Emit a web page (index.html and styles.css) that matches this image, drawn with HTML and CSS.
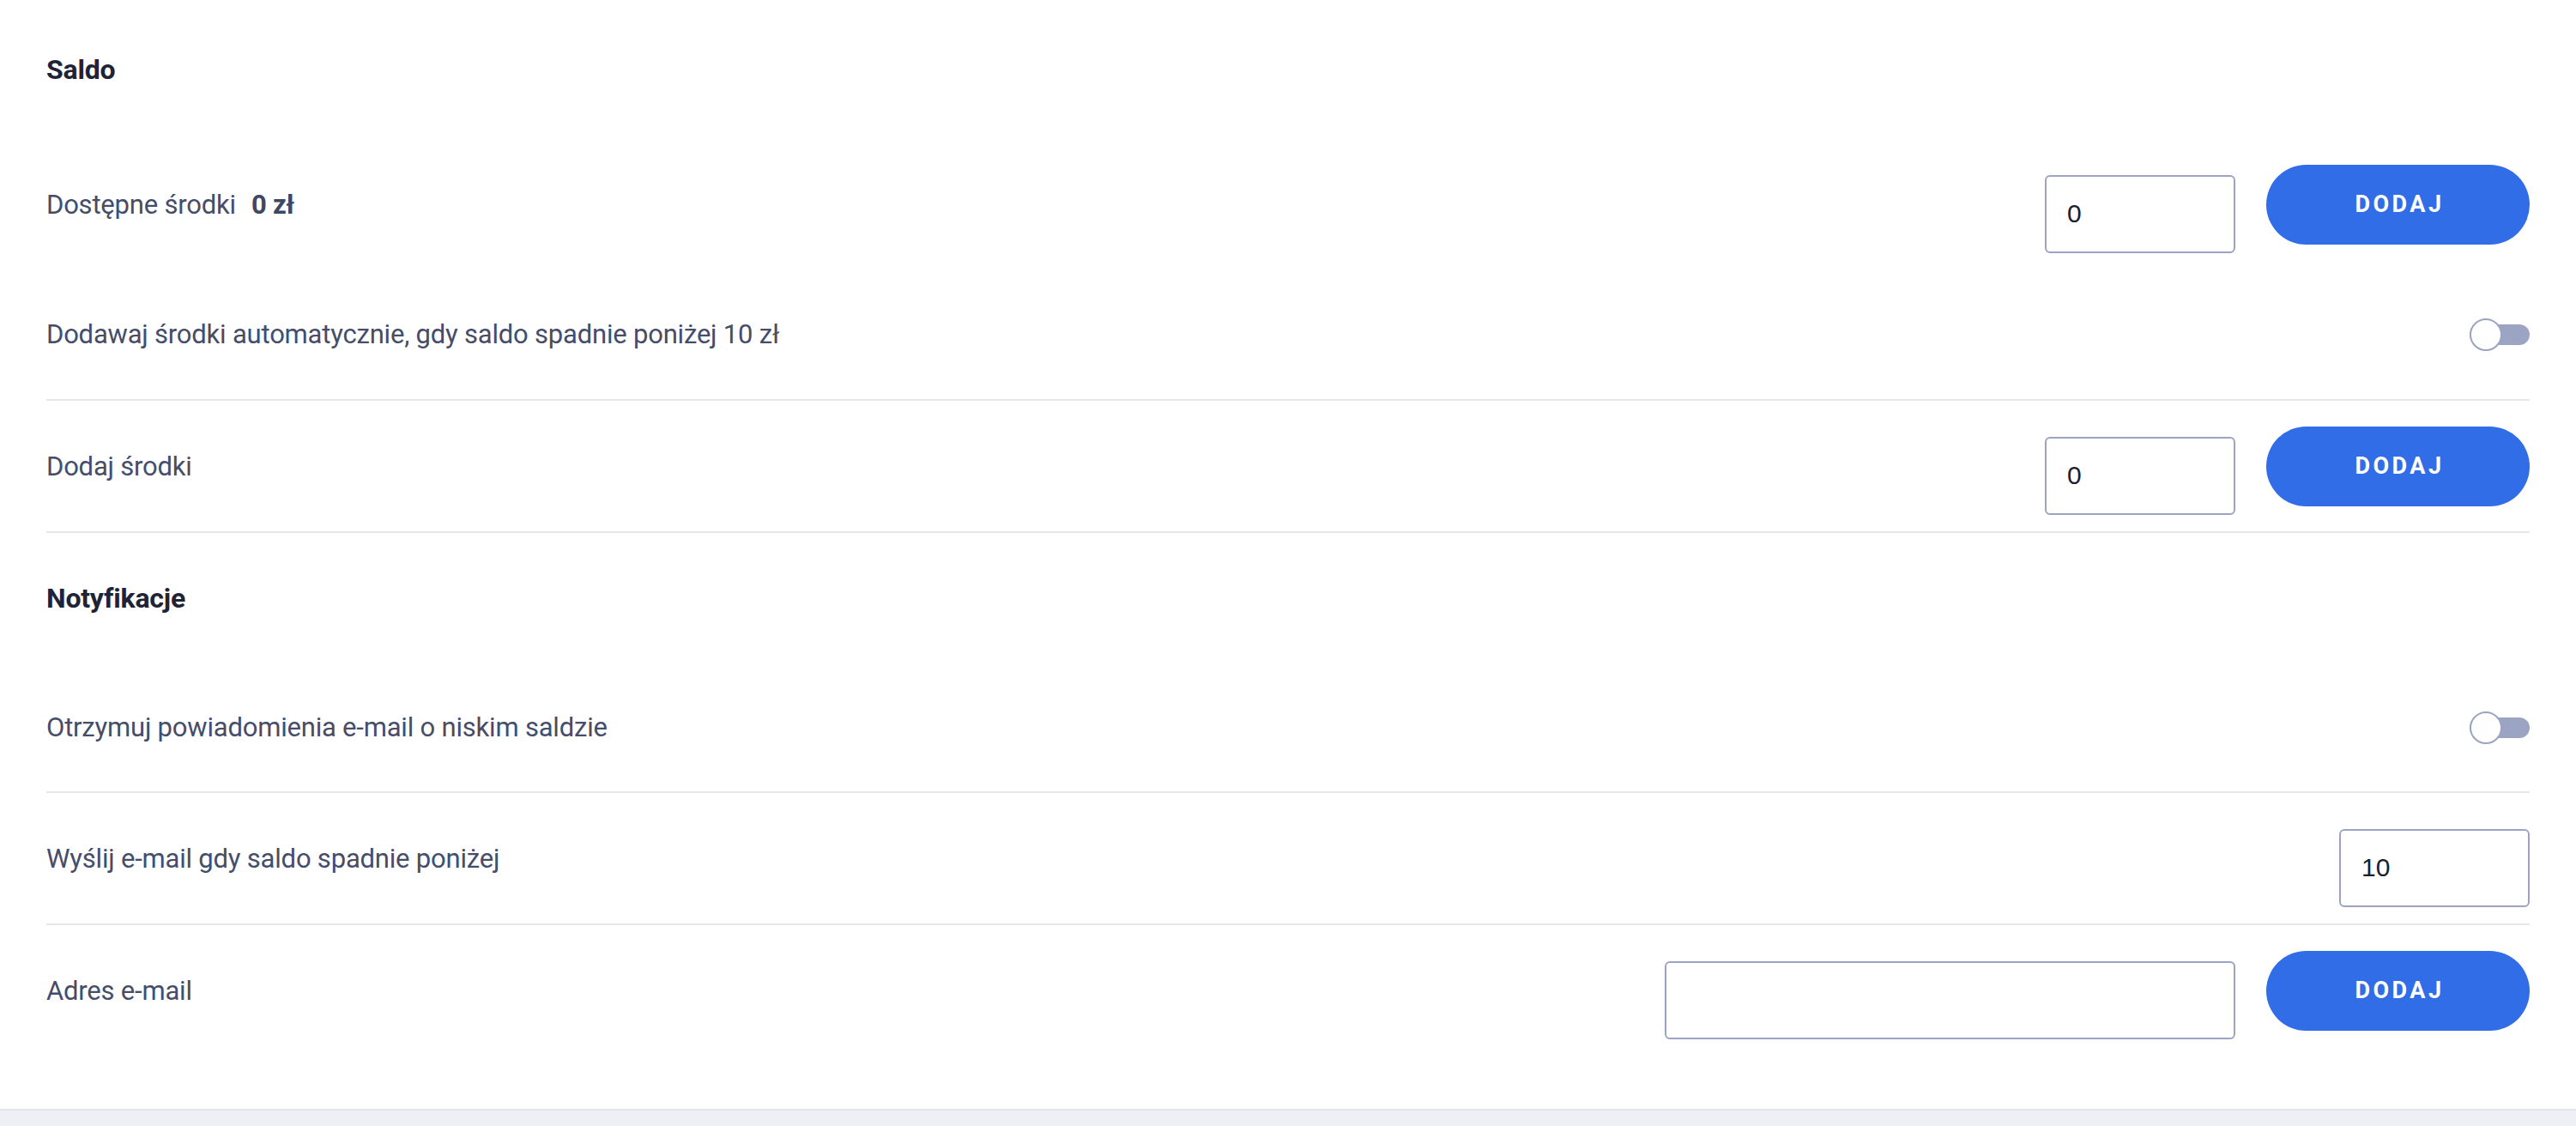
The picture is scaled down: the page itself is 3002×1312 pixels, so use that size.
FILE: index.html
```html
<!DOCTYPE html>
<html lang="pl">
<head>
<meta charset="utf-8">
<title>Saldo</title>
<link rel="stylesheet" href="styles.css">
</head>
<body>
<main class="panel">
  <section class="section">
    <div class="section-title section-title--first">Saldo</div>
    <div class="row row--plain">
      <div class="label">Dostępne środki<span class="amount">0 zł</span></div>
      <div class="controls">
        <input class="field field--num" type="text" value="0">
        <button class="btn" type="button">DODAJ</button>
      </div>
    </div>
    <div class="row row--short">
      <div class="label">Dodawaj środki automatycznie, gdy saldo spadnie poniżej 10 zł</div>
      <div class="toggle"><span class="toggle-knob"></span></div>
    </div>
    <div class="row">
      <div class="label">Dodaj środki</div>
      <div class="controls">
        <input class="field field--num" type="text" value="0">
        <button class="btn" type="button">DODAJ</button>
      </div>
    </div>
  </section>
  <section class="section">
    <div class="section-title">Notyfikacje</div>
    <div class="row row--short2">
      <div class="label">Otrzymuj powiadomienia e-mail o niskim saldzie</div>
      <div class="toggle"><span class="toggle-knob"></span></div>
    </div>
    <div class="row">
      <div class="label">Wyślij e-mail gdy saldo spadnie poniżej</div>
      <div class="controls">
        <input class="field field--num" type="text" value="10">
      </div>
    </div>
    <div class="row row--plain row--last">
      <div class="label">Adres e-mail</div>
      <div class="controls">
        <input class="field field--email" type="text" value="">
        <button class="btn" type="button">DODAJ</button>
      </div>
    </div>
  </section>
</main>
<footer class="footer"></footer>
</body>
</html>
```

FILE: styles.css
```css
html, body {
  margin: 0;
  padding: 0;
  background: #ffffff;
}

body {
  font-family: Roboto, "Noto Sans", "Liberation Sans", sans-serif;
  color: #454d6a;
}

.panel {
  padding: 0 54px 62px 54px;
}

.section-title {
  height: 152px;
  display: flex;
  align-items: center;
  font-size: 32px;
  font-weight: 700;
  color: #1e2435;
  letter-spacing: -0.2px;
}

.section-title--first {
  height: 162px;
}

.row {
  height: 152px;
  display: flex;
  align-items: center;
  justify-content: space-between;
  border-bottom: 2px solid #e6e7ea;
}

.row--plain {
  border-bottom: none;
}

.row--short {
  height: 151px;
}

.row--short2 {
  height: 149px;
}

.label {
  font-size: 31px;
  letter-spacing: -0.2px;
  color: #454d6a;
}

.amount {
  font-weight: 700;
  margin-left: 18px;
  color: #3f4764;
}

.controls {
  display: flex;
  align-items: center;
  gap: 36px;
}

.field {
  box-sizing: border-box;
  height: 91px;
  margin-top: 22px;
  border: 2px solid #9ca4c3;
  border-radius: 6px;
  padding: 0 24px;
  font-family: "Liberation Sans", Arial, sans-serif;
  font-size: 30px;
  color: #1b2030;
  background: #ffffff;
  outline: none;
}

.field--num {
  width: 222px;
}

.field--email {
  width: 665px;
}

.btn {
  box-sizing: border-box;
  width: 307px;
  height: 93px;
  border: none;
  border-radius: 47px;
  background: #306de6;
  color: #ffffff;
  font-family: Roboto, "Noto Sans", sans-serif;
  font-size: 27px;
  font-weight: 700;
  letter-spacing: 3.5px;
  padding: 0 0 0 4px;
  cursor: pointer;
}

.toggle {
  position: relative;
  width: 70px;
  height: 38px;
  display: flex;
  align-items: center;
}

.toggle::before {
  content: "";
  display: block;
  width: 70px;
  height: 24px;
  border-radius: 12px;
  background: #9ca4c3;
}

.toggle-knob {
  position: absolute;
  left: 0;
  top: 0;
  box-sizing: border-box;
  width: 38px;
  height: 38px;
  border-radius: 50%;
  border: 2px solid #9ca4c3;
  background: #ffffff;
}

.footer {
  height: 18px;
  border-top: 2px solid #e3e4e9;
  background: #eff0f5;
}
```
